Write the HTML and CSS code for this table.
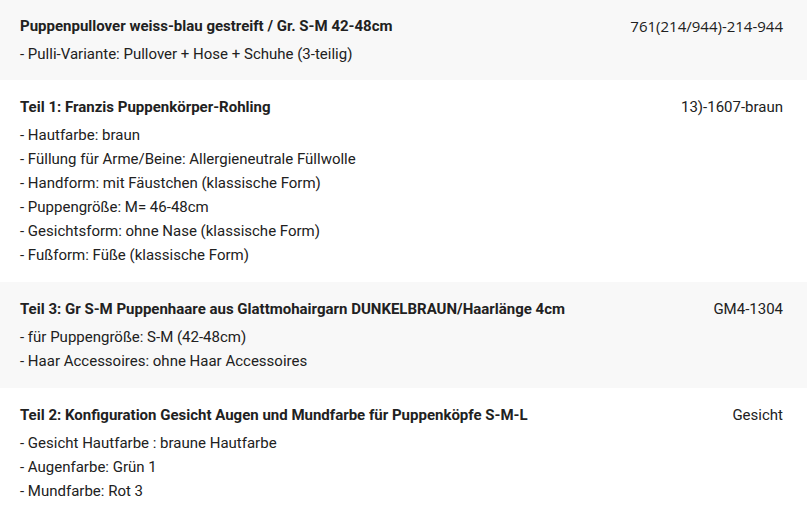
FILE: index.html
```html
<!DOCTYPE html>
<html lang="de">
<head>
  <meta charset="UTF-8" />
  <title>Warenkorb Positionen</title>
  <link rel="stylesheet" href="styles.css">
</head>
<body>

  <div class="items">
    <div class="item">
      <div class="item-main">
        <div class="item-title">Puppenpullover weiss-blau gestreift / Gr. S-M 42-48cm</div>
        <ul class="item-options">
          <li>- Pulli-Variante: Pullover + Hose + Schuhe (3-teilig)</li>
        </ul>
      </div>
      <div class="item-sku sku-alt">761(214/944)-214-944</div>
    </div>

    <div class="item">
      <div class="item-main">
        <div class="item-title">Teil 1: Franzis Puppenkörper-Rohling</div>
        <ul class="item-options">
          <li>- Hautfarbe: braun</li>
          <li>- Füllung für Arme/Beine: Allergieneutrale Füllwolle</li>
          <li>- Handform: mit Fäustchen (klassische Form)</li>
          <li>- Puppengröße: M= 46-48cm</li>
          <li>- Gesichtsform: ohne Nase (klassische Form)</li>
          <li>- Fußform: Füße (klassische Form)</li>
        </ul>
      </div>
      <div class="item-sku">13)-1607-braun</div>
    </div>

    <div class="item">
      <div class="item-main">
        <div class="item-title">Teil 3: Gr S-M Puppenhaare aus Glattmohairgarn DUNKELBRAUN/Haarlänge 4cm</div>
        <ul class="item-options">
          <li>- für Puppengröße: S-M (42-48cm)</li>
          <li>- Haar Accessoires: ohne Haar Accessoires</li>
        </ul>
      </div>
      <div class="item-sku">GM4-1304</div>
    </div>

    <div class="item">
      <div class="item-main">
        <div class="item-title">Teil 2: Konfiguration Gesicht Augen und Mundfarbe für Puppenköpfe S-M-L</div>
        <ul class="item-options">
          <li>- Gesicht Hautfarbe : braune Hautfarbe</li>
          <li>- Augenfarbe: Grün 1</li>
          <li>- Mundfarbe: Rot 3</li>
        </ul>
      </div>
      <div class="item-sku">Gesicht</div>
    </div>
  </div>

</body>
</html>
```

FILE: styles.css
```css
:root {
  --text: #212121;
  --stripe: #f8f8f8;
  --font: Roboto, 'Liberation Sans', sans-serif;
}

body {
  margin: 0;
  font-family: var(--font);
  font-size: 15px;
  color: var(--text);
  background: white;
}

.items {
  display: flex;
  flex-direction: column;
}

.item {
  display: flex;
  justify-content: space-between;
  align-items: flex-start;
  padding: 15px 24px 15px 20px;
}

.item:first-child {
  padding-top: 14px;
  padding-bottom: 14px;
}

.item:nth-child(odd) {
  background-color: var(--stripe);
}

.item-title {
  font-weight: bold;
  line-height: 24px;
}

.item-options {
  list-style: none;
  margin: 4px 0 0;
  padding: 0;
}

.item-options li {
  line-height: 24px;
}

.item-sku {
  line-height: 24px;
  white-space: nowrap;
}

.sku-alt {
  font-family: 'Open Sans', sans-serif;
}
```
